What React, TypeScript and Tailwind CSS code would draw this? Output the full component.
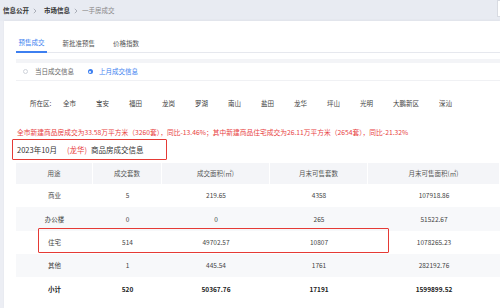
import React from "react";

const font = { fontFamily: '"Noto Sans CJK SC", "Noto Sans", sans-serif' };

function Chevron() {
  return (
    <svg width="4" height="6" viewBox="0 0 4 6" className="mx-[4px]">
      <path d="M0.8 0.8 L3 3 L0.8 5.2" fill="none" stroke="#9aa0aa" strokeWidth="0.8" />
    </svg>
  );
}

const districts = ["全市", "宝安", "福田", "龙岗", "罗湖", "南山", "盐田", "龙华", "坪山", "光明", "大鹏新区", "深汕"];

const cols = ["w-[77px]", "w-[69px]", "w-[108px]", "w-[98px]", "w-[132px]"];
const header = ["用途", "成交套数", "成交面积(㎡)", "月末可售套数", "月末可售面积(㎡)"];
const rows: { cells: string[]; gray: boolean; bold?: boolean; h: string }[] = [
  { cells: ["商业", "5", "219.65", "4358", "107918.86"], gray: false, h: "h-[23px]" },
  { cells: ["办公楼", "0", "0", "265", "51522.67"], gray: true, h: "h-[24px]" },
  { cells: ["住宅", "514", "49702.57", "10807", "1078265.23"], gray: false, h: "h-[23px]" },
  { cells: ["其他", "1", "445.54", "1761", "282192.76"], gray: true, h: "h-[23px]" },
  { cells: ["小计", "520", "50367.76", "17191", "1599899.52"], gray: false, bold: true, h: "h-[24px]" },
];

export default function App() {
  return (
    <div className="relative w-[500px] h-[308px] overflow-hidden bg-[#eceef4]" style={font}>
      {/* breadcrumb bar */}
      <div className="h-[21px] bg-[#e8ebf2] flex items-center pl-[3px] text-[6.5px] leading-none">
        <span className="font-bold text-[#333]">信息公开</span>
        <Chevron />
        <span className="ml-[3px] font-bold text-[#333]">市场信息</span>
        <Chevron />
        <span className="text-[#888]">一手房成交</span>
      </div>

      {/* card */}
      <div className="ml-[4px] h-[287px] bg-white pl-[12px] pt-[15px] shadow-[0_-1px_2px_rgba(0,0,0,0.04)]">
        {/* tabs */}
        <div className="h-[17px] border-b border-[#e6e8ee] flex items-start gap-[13px] text-[6.5px] leading-none">
          <div className="h-[17px] w-[31px] flex items-center justify-center pb-[2px] border-b-2 border-[#3d7ff0] text-[#3d7ff0]">
            预售成交
          </div>
          <div className="h-[17px] px-[2.5px] flex items-center pb-[2px] text-[#555]">新批准预售</div>
          <div className="h-[17px] px-[2.5px] flex items-center pb-[2px] text-[#555]">价格指数</div>
        </div>

        {/* gray band */}
        <div className="mt-[6px] h-[4px] bg-[#f3f4f7]" />

        {/* radio row */}
        <div className="h-[18px] border-b border-[#f0f1f4] flex items-center pl-[6.5px] text-[6.5px] leading-none">
          <span className="w-[5px] h-[5px] rounded-full border-[0.7px] border-[#cfd3da] bg-white" />
          <span className="ml-[7.5px] text-[#666]">当日成交信息</span>
          <span className="ml-[13.5px] w-[5px] h-[5px] rounded-full bg-[#3d7ff0] flex items-center justify-center">
            <span className="w-[2px] h-[2px] rounded-full bg-white" />
          </span>
          <span className="ml-[6.5px] text-[#3d7ff0]">上月成交信息</span>
        </div>

        {/* district row */}
        <div className="mt-[15px] h-[14px] flex items-center pl-[14px] text-[6.5px] leading-none text-[#444]">
          <span className="w-[33px]">所在区:</span>
          <div className="flex items-center gap-[20px]">
            {districts.map((d) => (
              <span key={d}>{d}</span>
            ))}
          </div>
        </div>

        {/* red summary */}
        <div className="mt-[17px] h-[10px] flex items-center pl-[1px] text-[6.75px] leading-none text-[#e8423f] whitespace-nowrap">
          全市新建商品房成交为33.58万平方米（3260套），同比-13.46%；其中新建商品住宅成交为26.11万平方米（2654套），同比-21.32%
        </div>

        {/* title */}
        <div className="mt-[7px] h-[12px] flex items-center pl-[1px] text-[7.5px] leading-none text-[#333] whitespace-nowrap">
          <span>2023年10月</span>
          <span className="ml-[10px] text-[#e8423f]">(龙华)</span>
          <span className="ml-[4px]">商品房成交信息</span>
        </div>

        {/* table */}
        <div className="mt-[7px] w-[484px] text-[6.5px] leading-none text-[#444]">
          <div className="h-[21px] flex bg-[#f4f5f8] text-[#555]">
            {header.map((h, i) => (
              <div key={h} className={`${cols[i]} flex items-center justify-center border-r border-white`}>
                {h}
              </div>
            ))}
          </div>
          {rows.map((r) => (
            <div
              key={r.cells[0]}
              className={`${r.h} flex ${r.gray ? "bg-[#f7f8fa]" : "bg-white"} ${r.bold ? "font-bold text-[#222]" : ""}`}
            >
              {r.cells.map((c, i) => (
                <div key={i} className={`${cols[i]} flex items-center justify-center`}>
                  {c}
                </div>
              ))}
            </div>
          ))}
        </div>
      </div>

      {/* annotation boxes */}
      <div className="absolute left-[12px] top-[139px] w-[155px] h-[21px] border-[1.5px] border-[#e53a35] rounded-[1px]" />
      <div className="absolute left-[38px] top-[228px] w-[351px] h-[25px] border-[1.5px] border-[#e53a35] rounded-[1px]" />

      {/* top-right edge element */}
      <div className="absolute left-[497px] top-0 w-[6px] h-[17px] bg-white border border-[#d8dbe2]" />
    </div>
  );
}
